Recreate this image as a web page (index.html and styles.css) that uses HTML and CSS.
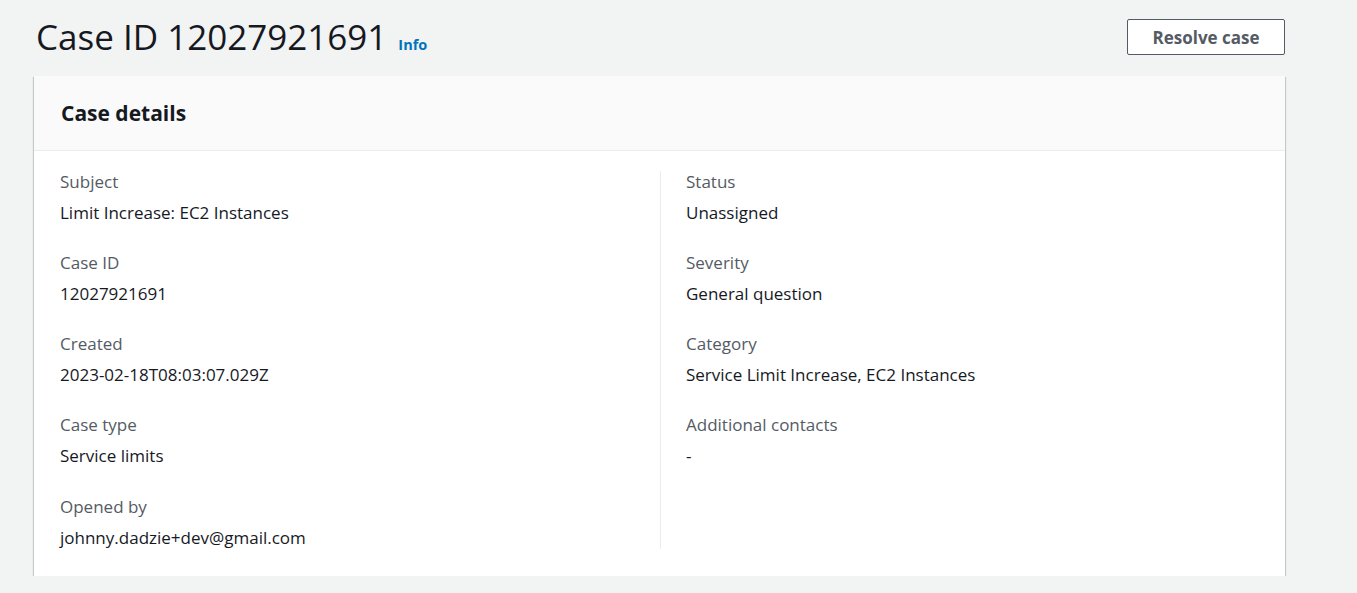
FILE: index.html
```html
<!DOCTYPE html>
<html lang="en">
<head>
<meta charset="utf-8">
<title>Case ID 12027921691</title>
<link rel="stylesheet" href="styles.css">
</head>
<body>
<div class="page">
  <header class="page-header">
    <div class="title-wrap">
      <h1 class="title">Case ID 12027921691</h1>
      <a class="info" href="#">Info</a>
    </div>
    <button class="btn" type="button">Resolve case</button>
  </header>
  <section class="card">
    <div class="card-header">
      <h2 class="card-title">Case details</h2>
    </div>
    <div class="card-body">
      <div class="col">
        <div class="kv"><div class="label">Subject</div><div class="value">Limit Increase: EC2 Instances</div></div>
        <div class="kv"><div class="label">Case ID</div><div class="value">12027921691</div></div>
        <div class="kv"><div class="label">Created</div><div class="value">2023-02-18T08:03:07.029Z</div></div>
        <div class="kv"><div class="label">Case type</div><div class="value">Service limits</div></div>
        <div class="kv"><div class="label">Opened by</div><div class="value">johnny.dadzie+dev@gmail.com</div></div>
      </div>
      <div class="col col-right">
        <div class="kv"><div class="label">Status</div><div class="value">Unassigned</div></div>
        <div class="kv"><div class="label">Severity</div><div class="value">General question</div></div>
        <div class="kv"><div class="label">Category</div><div class="value">Service Limit Increase, EC2 Instances</div></div>
        <div class="kv"><div class="label">Additional contacts</div><div class="value">-</div></div>
      </div>
    </div>
  </section>
</div>
</body>
</html>
```
FILE: styles.css
```css
* { box-sizing: border-box; }
html, body { margin: 0; padding: 0; }
body {
  background: #f2f3f3;
  font-family: "Open Sans", "Noto Sans", Arial, sans-serif;
  color: #16191f;
}
.page {
  width: 1251px;
  margin-left: 34px;
  padding-top: 19px;
}
.page-header {
  display: flex;
  justify-content: space-between;
  align-items: center;
  height: 36px;
  margin-bottom: 21px;
}
.title-wrap {
  display: flex;
  align-items: baseline;
  gap: 11px;
  padding-left: 2px;
}
.title {
  margin: 0;
  font-size: 35px;
  font-weight: 400;
  line-height: 40px;
  color: #16191f;
}
.info {
  font-size: 14.5px;
  font-weight: 700;
  color: #0073bb;
  text-decoration: none;
}
.btn {
  width: 158px;
  height: 36px;
  background: #fff;
  border: 1px solid #545b64;
  border-radius: 2px;
  font-family: inherit;
  font-size: 17px;
  font-weight: 700;
  color: #545b64;
  padding: 0;
}
.card {
  background: #fff;
  box-shadow: 0 1px 1px 0 rgba(0,28,36,.3), 1px 1px 1px 0 rgba(0,28,36,.15), -1px 1px 1px 0 rgba(0,28,36,.15);
}
.card-header {
  background: #fafafa;
  border-bottom: 1px solid #eaeded;
  height: 75px;
  display: flex;
  align-items: center;
  padding-left: 27px;
}
.card-title {
  margin: 0;
  font-size: 21px;
  font-weight: 700;
  color: #16191f;
}
.card-body {
  display: grid;
  grid-template-columns: 600px 600px;
  padding: 20px 26px 27px 26px;
}
.col {
  display: flex;
  flex-direction: column;
  gap: 28px;
}
.col-right {
  border-left: 1px solid #eaeded;
  padding-left: 25px;
}
.kv {
  display: flex;
  flex-direction: column;
  gap: 9px;
}
.col:first-child .kv:last-child { margin-top: 1px; }
.label {
  font-size: 17px;
  line-height: 22px;
  color: #545b64;
}
.value {
  font-size: 17px;
  line-height: 22px;
  color: #16191f;
}
```
